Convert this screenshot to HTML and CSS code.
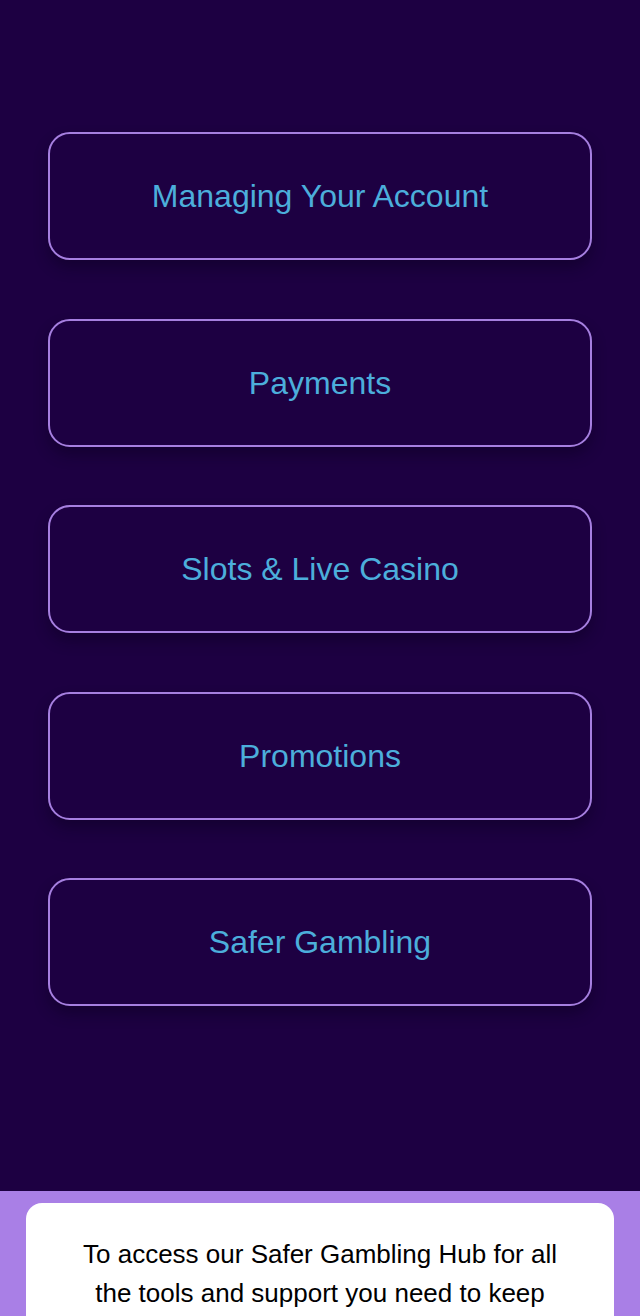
FILE: index.html
```html
<!DOCTYPE html>
<html>
<head>
<meta charset="utf-8">
<link rel="stylesheet" href="styles.css">
</head>
<body>
<main class="menu">
  <a class="card" href="#">Managing Your Account</a>
  <a class="card" href="#">Payments</a>
  <a class="card" href="#">Slots &amp; Live Casino</a>
  <a class="card" href="#">Promotions</a>
  <a class="card" href="#">Safer Gambling</a>
</main>
<footer class="footer">
  <div class="notice">
    <p>To access our Safer Gambling Hub for all the tools and support you need to keep</p>
  </div>
</footer>
</body>
</html>
```

FILE: styles.css
```css
html, body {
  margin: 0;
  padding: 0;
}
body {
  background: #1d0042;
  font-family: "Liberation Sans", Arial, sans-serif;
  height: 1316px;
  overflow: hidden;
}
.menu {
  display: flex;
  flex-direction: column;
  gap: 58.5px;
  padding: 132px 48px 0;
  height: 1191px;
  box-sizing: border-box;
}
.card {
  display: flex;
  flex: none;
  align-items: center;
  justify-content: center;
  height: 128px;
  padding-top: 1px;
  box-sizing: border-box;
  border: 2px solid #a67fe0;
  border-radius: 22px;
  color: #4caedb;
  font-size: 32px;
  text-decoration: none;
  box-shadow: 0 8px 14px rgba(10, 0, 30, 0.45);
}
.footer {
  background: #a97fe6;
  padding: 12px 26px 0;
}
.notice {
  background: #ffffff;
  border-radius: 16px 16px 0 0;
  padding: 32px 50px 40px;
  text-align: center;
}
.notice p {
  margin: 0;
  color: #000;
  font-size: 26px;
  line-height: 39px;
}
```
